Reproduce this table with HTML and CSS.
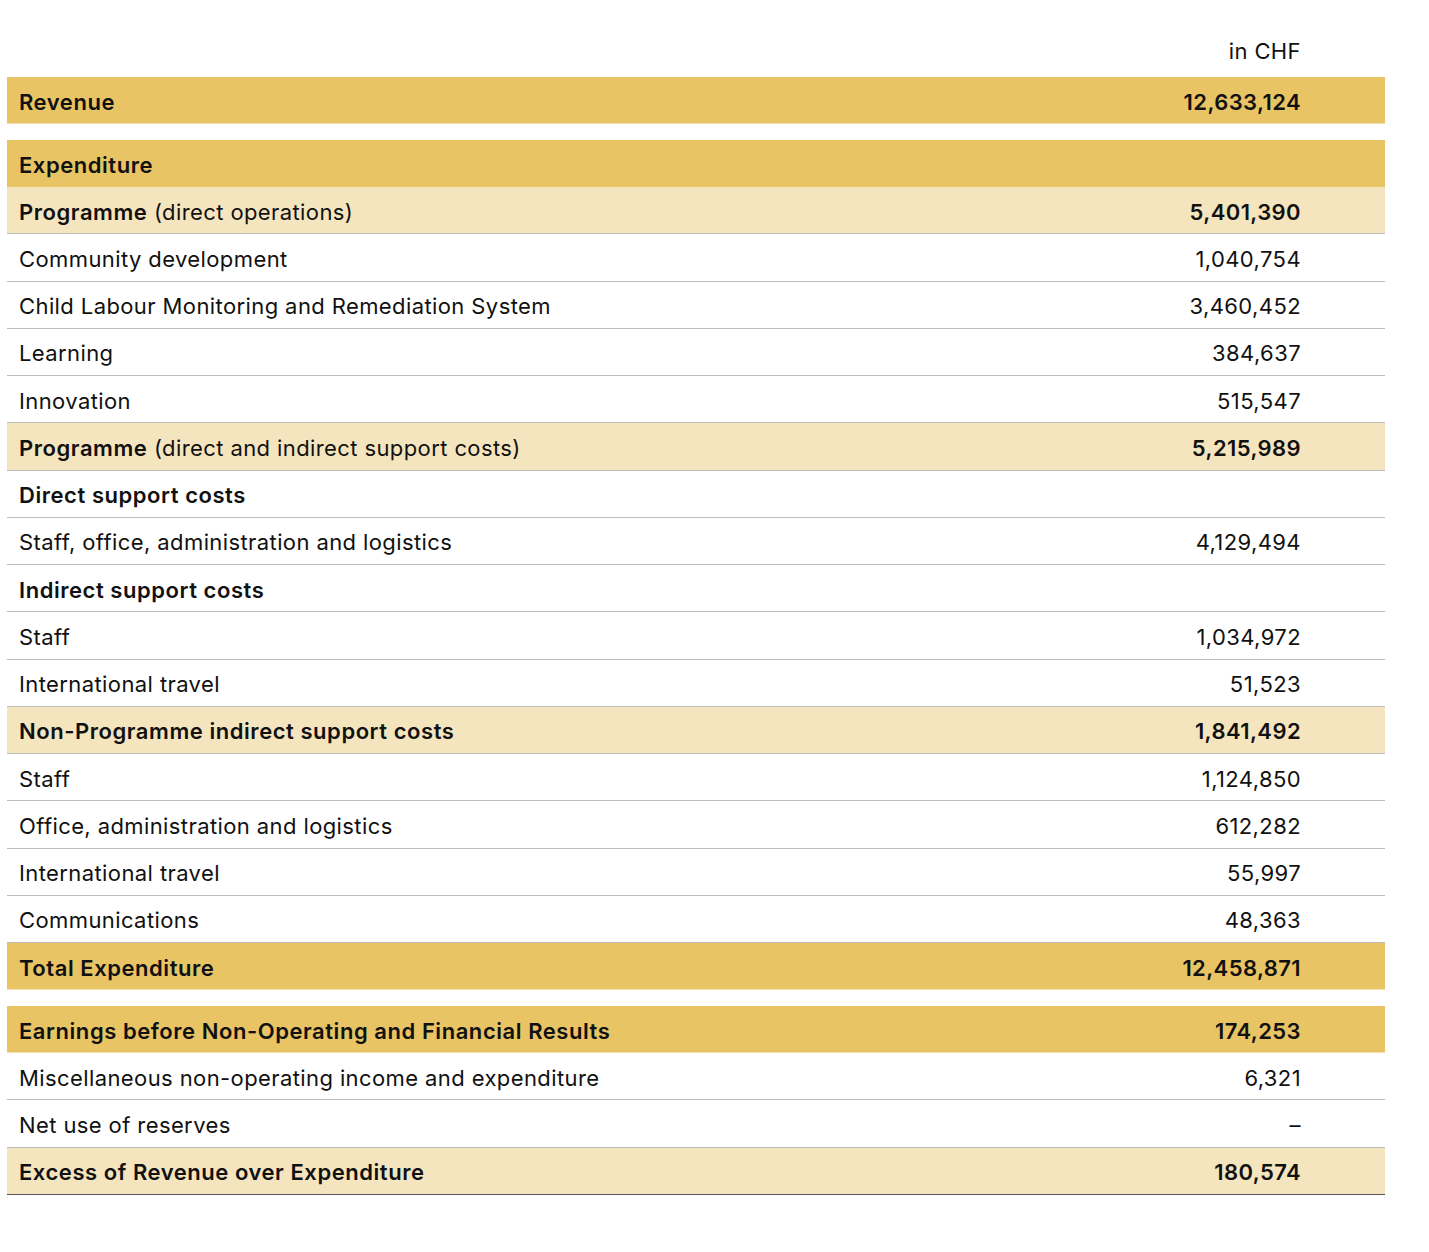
FILE: index.html
```html
<!DOCTYPE html>
<html>
<head>
<meta charset="utf-8">
<link rel="stylesheet" href="styles.css">
</head>
<body>
<div class="page">
  <div class="row head"><span class="label"></span><span class="val">in CHF</span></div>
  <div class="row dark"><span class="label"><b>Revenue</b></span><span class="val"><b>12,633,124</b></span></div>
  <div class="gap"></div>
  <div class="row dark nob"><span class="label"><b>Expenditure</b></span><span class="val"></span></div>
  <div class="row light"><span class="label"><b>Programme</b> (direct operations)</span><span class="val"><b>5,401,390</b></span></div>
  <div class="row"><span class="label">Community development</span><span class="val">1,040,754</span></div>
  <div class="row"><span class="label">Child Labour Monitoring and Remediation System</span><span class="val">3,460,452</span></div>
  <div class="row"><span class="label">Learning</span><span class="val">384,637</span></div>
  <div class="row"><span class="label">Innovation</span><span class="val">515,547</span></div>
  <div class="row light"><span class="label"><b>Programme</b> (direct and indirect support costs)</span><span class="val"><b>5,215,989</b></span></div>
  <div class="row"><span class="label"><b>Direct support costs</b></span><span class="val"></span></div>
  <div class="row"><span class="label">Staff, office, administration and logistics</span><span class="val">4,129,494</span></div>
  <div class="row"><span class="label"><b>Indirect support costs</b></span><span class="val"></span></div>
  <div class="row"><span class="label">Staff</span><span class="val">1,034,972</span></div>
  <div class="row"><span class="label">International travel</span><span class="val">51,523</span></div>
  <div class="row light"><span class="label"><b>Non-Programme indirect support costs</b></span><span class="val"><b>1,841,492</b></span></div>
  <div class="row"><span class="label">Staff</span><span class="val">1,124,850</span></div>
  <div class="row"><span class="label">Office, administration and logistics</span><span class="val">612,282</span></div>
  <div class="row"><span class="label">International travel</span><span class="val">55,997</span></div>
  <div class="row"><span class="label">Communications</span><span class="val">48,363</span></div>
  <div class="row dark"><span class="label"><b>Total Expenditure</b></span><span class="val"><b>12,458,871</b></span></div>
  <div class="gap"></div>
  <div class="row dark"><span class="label"><b>Earnings before Non-Operating and Financial Results</b></span><span class="val"><b>174,253</b></span></div>
  <div class="row"><span class="label">Miscellaneous non-operating income and expenditure</span><span class="val">6,321</span></div>
  <div class="row"><span class="label">Net use of reserves</span><span class="val">–</span></div>
  <div class="row light last"><span class="label"><b>Excess of Revenue over Expenditure</b></span><span class="val"><b>180,574</b></span></div>
</div>
</body>
</html>
```
FILE: styles.css
```css
html, body {
  margin: 0;
  padding: 0;
  background: #fff;
}
.page {
  width: 1378px;
  margin-left: 7px;
  font-family: Inter, "Liberation Sans", Arial, sans-serif;
  font-size: 22px;
  letter-spacing: 0.4px;
  color: #111;
}
.row {
  display: flex;
  align-items: center;
  height: 43.25px;
  border-bottom: 1px solid #bdbdbd;
  padding: 3px 84px 0 12px;
  box-sizing: content-box;
}
.row .label { flex: 1; }
.row .val { text-align: right; }
b { font-weight: 600; letter-spacing: 0.55px; }
.val b { letter-spacing: 0.4px; }
.head {
  height: 39px;
  align-items: flex-start;
  padding-top: 38px;
  border-bottom: none;
}
.dark { background: #e8c465; border-bottom-color: #f3e1b0; height: 43px; }
.dark.nob { border-bottom: none; height: 44px; }
.light { background: #f5e5bf; }
.last { border-bottom-color: #555; }
.gap { height: 16px; }
```
